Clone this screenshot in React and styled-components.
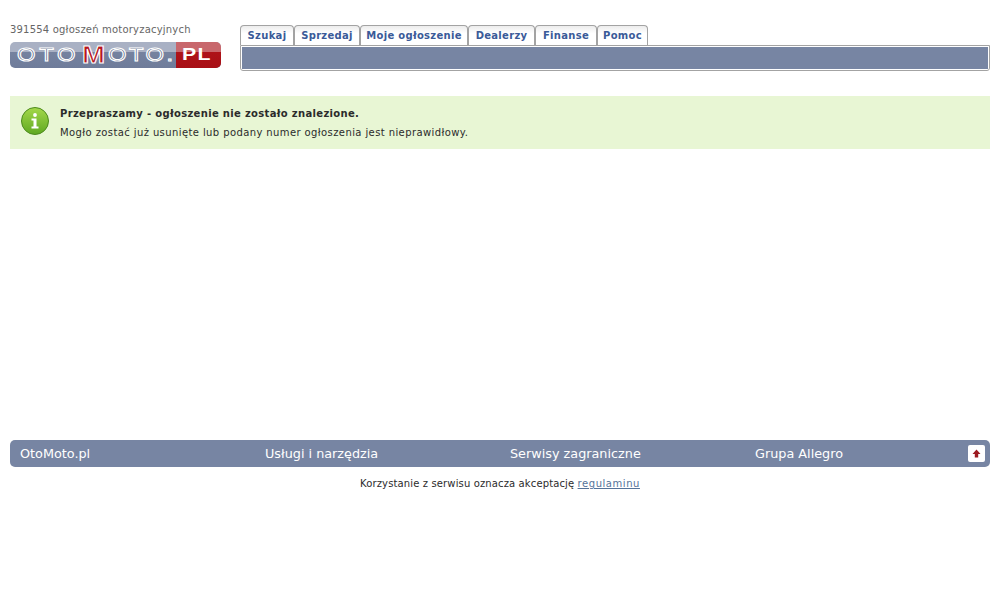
import React from 'react';
import styled, { createGlobalStyle } from 'styled-components';

const GlobalStyle = createGlobalStyle`
  html, body {
    margin: 0;
    padding: 0;
    background: #fff;
    font-family: "DejaVu Sans", Verdana, sans-serif;
    font-size: 10px;
    color: #2b2b2b;
  }
`;

const Page = styled.div`
  width: 980px;
  height: 600px;
  padding: 0 10px;
`;

const Header = styled.header`
  display: flex;
  height: 71px;
  margin-bottom: 25px;
`;

const Brand = styled.div`
  width: 230px;
  padding-top: 23px;
  box-sizing: border-box;
`;

const Count = styled.div`
  height: 19px;
  font-size: 10px;
  line-height: 13px;
  letter-spacing: 0.2px;
  color: #666;
`;

const Logo = styled.div`
  display: flex;
  width: 211px;
  height: 26px;
  border-radius: 5px;
  overflow: hidden;
  background: linear-gradient(to bottom, #a9b1c4 0, #a9b1c4 40%, #75829f 40%, #6f7c9a 100%);
`;

const LogoBlue = styled.div`
  display: flex;
  align-items: center;
  width: 166px;
  padding-left: 7px;
  box-sizing: border-box;
`;

const LogoRed = styled.div`
  display: flex;
  align-items: center;
  flex: 1;
  padding-left: 6px;
  background: linear-gradient(to bottom, #c8676c 0, #c8676c 40%, #ae1218 40%, #a80f16 100%);
`;

const LogoLetters = styled.span`
  font-family: "Liberation Sans", sans-serif;
  font-size: 19px;
  line-height: 26px;
  color: #5f6c88;
  -webkit-text-stroke: 1px #fff;
  letter-spacing: ${p => p.$spacing}px;
  transform: scaleX(1.25);
  transform-origin: left center;
  width: ${p => p.$w}px;
  white-space: nowrap;
`;

const LogoM = styled.span`
  font-family: "Liberation Sans", sans-serif;
  font-weight: bold;
  font-size: 24px;
  line-height: 26px;
  color: #b5161d;
  -webkit-text-stroke: 1px #fff;
  width: 23px;
  margin-right: 3px;
  text-align: center;
  transform: scaleX(1.15);
`;

const LogoPl = styled.span`
  font-family: "Liberation Sans", sans-serif;
  font-weight: bold;
  font-size: 17px;
  color: #fff;
  letter-spacing: 1px;
  transform: scaleX(1.25);
  transform-origin: left center;
`;

const Nav = styled.nav`
  flex: 1;
  padding-top: 25px;
`;

const Tabs = styled.div`
  display: flex;
  height: 20px;
`;

const Tab = styled.a`
  width: ${p => p.$w}px;
  box-sizing: border-box;
  border: 1px solid #a3a3a3;
  border-bottom: none;
  border-radius: 4px 4px 0 0;
  background: linear-gradient(to bottom, #ececec, #fff 40%);
  font-size: 10px;
  font-weight: bold;
  line-height: 20px;
  letter-spacing: 0.3px;
  text-align: center;
  color: #3a5a98;
`;

const SubBar = styled.div`
  height: 26px;
  box-sizing: border-box;
  padding: 1px;
  border: 1px solid #a3a3a3;
  border-radius: 0 0 3px 3px;
  background: #fff;

  &::after {
    content: '';
    display: block;
    height: 22px;
    background: #7785a3;
  }
`;

const Notice = styled.section`
  display: flex;
  align-items: center;
  gap: 11px;
  height: 53px;
  padding-left: 11px;
  background: #e8f6d4;
  margin-bottom: 291px;

  > svg {
    margin-bottom: 3px;
  }
`;

const NoticeTitle = styled.div`
  font-size: 10px;
  font-weight: bold;
  line-height: 19px;
  letter-spacing: 0.33px;
`;

const NoticeText = styled.div`
  font-size: 10px;
  line-height: 19px;
  letter-spacing: 0.4px;
`;

const FooterBar = styled.footer`
  display: grid;
  grid-template-columns: repeat(4, 245px);
  align-items: center;
  position: relative;
  height: 27px;
  padding-left: 10px;
  border-radius: 5px;
  background: #7785a3;
  color: #fff;
  font-size: 12.8px;
`;

const TopButton = styled.a`
  position: absolute;
  right: 5px;
  top: 5px;
  display: flex;
  align-items: center;
  justify-content: center;
  width: 17px;
  height: 17px;
  border-radius: 2px;
  background: #fff;
`;

const Legal = styled.p`
  margin: 10px 0 0;
  font-size: 10px;
  line-height: 14px;
  letter-spacing: 0.13px;
  text-align: center;
`;

const LegalLink = styled.a`
  color: #567399;
  letter-spacing: 0.55px;
  text-decoration: underline;
`;

const InfoIcon = () => (
  <svg width="28" height="30" viewBox="0 0 28 30">
    <defs>
      <linearGradient id="infoFill" x1="0" y1="0" x2="0" y2="1">
        <stop offset="0" stopColor="#a4d84a" />
        <stop offset="1" stopColor="#5fa822" />
      </linearGradient>
    </defs>
    <circle cx="14" cy="15" r="13.5" fill="url(#infoFill)" stroke="#4d8a1e" />
    <circle cx="14" cy="9" r="1.9" fill="#fff" />
    <path d="M10.5 12.5h5v8h2v2h-7v-2h2v-6h-2z" fill="#fff" />
  </svg>
);

const UpIcon = () => (
  <svg width="9" height="9" viewBox="0 0 9 9">
    <path d="M4.5 0.5L8.5 5H6.2v3.5H2.8V5H0.5z" fill="#9c1a20" />
  </svg>
);

const tabs = [
  ['Szukaj', 54],
  ['Sprzedaj', 66],
  ['Moje ogłoszenie', 108],
  ['Dealerzy', 67],
  ['Finanse', 62],
  ['Pomoc', 51],
];

const footerLinks = ['OtoMoto.pl', 'Usługi i narzędzia', 'Serwisy zagraniczne', 'Grupa Allegro'];

export default function App() {
  return (
    <Page>
      <GlobalStyle />
      <Header>
        <Brand>
          <Count>391554 ogłoszeń motoryzacyjnych</Count>
          <Logo>
            <LogoBlue>
              <LogoLetters $w={65} $spacing={3}>OTO</LogoLetters>
              <LogoM>M</LogoM>
              <LogoLetters $w={65} $spacing={2}>OTO.</LogoLetters>
            </LogoBlue>
            <LogoRed>
              <LogoPl>PL</LogoPl>
            </LogoRed>
          </Logo>
        </Brand>
        <Nav>
          <Tabs>
            {tabs.map(([label, w]) => (
              <Tab key={label} $w={w}>{label}</Tab>
            ))}
          </Tabs>
          <SubBar />
        </Nav>
      </Header>
      <Notice>
        <InfoIcon />
        <div>
          <NoticeTitle>Przepraszamy - ogłoszenie nie zostało znalezione.</NoticeTitle>
          <NoticeText>Mogło zostać już usunięte lub podany numer ogłoszenia jest nieprawidłowy.</NoticeText>
        </div>
      </Notice>
      <FooterBar>
        {footerLinks.map(label => (
          <span key={label}>{label}</span>
        ))}
        <TopButton><UpIcon /></TopButton>
      </FooterBar>
      <Legal>
        Korzystanie z serwisu oznacza akceptację <LegalLink>regulaminu</LegalLink>
      </Legal>
    </Page>
  );
}
